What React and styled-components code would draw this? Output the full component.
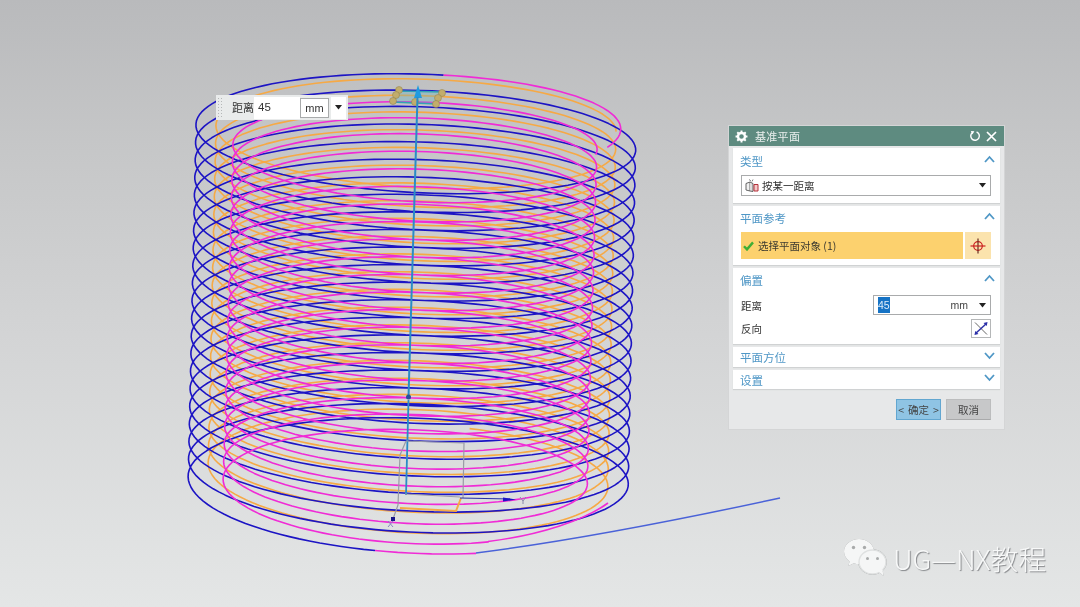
import React, { useMemo } from "react";
import styled, { createGlobalStyle } from "styled-components";

const Global = createGlobalStyle`
  html, body { margin: 0; padding: 0; background: #d4d5d6; }
  body { font-family: "Noto Sans CJK SC", "Liberation Sans", sans-serif; overflow: hidden; }
`;

const Stage = styled.div`
  position: relative;
  width: 1080px;
  height: 607px;
  overflow: hidden;
  background: linear-gradient(180deg, #b9babc 0%, #c6c7c8 25%, #d3d4d5 55%, #e4e6e6 100%);
  filter: blur(0.3px);
`;

const Scene = styled.svg`
  position: absolute;
  inset: 0;
  display: block;
`;

/* ---- floating distance entry ---- */
const Floater = styled.div`
  position: absolute;
  left: 216px;
  top: 95px;
  width: 132px;
  height: 25px;
  box-sizing: border-box;
  display: flex;
  align-items: center;
  background: #e9ebeb;
  font-size: 11px;
  color: #333;
`;
const Grip = styled.div`
  width: 7px;
  height: 22px;
  margin-left: 1px;
  background-image: radial-gradient(#b5b7b8 0.8px, transparent 1px);
  background-size: 3px 3px;
`;
const FloaterLabel = styled.span`
  margin-left: 8px;
  width: 22px;
  font-size: 11px;
  line-height: 25px;
`;
const FloaterInput = styled.div`
  width: 46px;
  height: 22px;
  padding-left: 4px;
  box-sizing: border-box;
  background: #fff;
  font: 11.5px/20px "Liberation Sans", sans-serif;
`;
const FloaterUnit = styled.div`
  width: 29px;
  height: 20px;
  box-sizing: border-box;
  border: 1px solid #a9abac;
  background: #fff;
  text-align: center;
  font: 11px/18px "Liberation Sans", sans-serif;
`;
const FloaterDrop = styled.div`
  width: 15px;
  height: 22px;
  margin-left: 2px;
  background: #fff;
  display: flex;
  align-items: center;
  justify-content: center;
`;

/* ---- dialog ---- */
const Dialog = styled.div`
  position: absolute;
  left: 729px;
  top: 126px;
  width: 275px;
  height: 303px;
  box-sizing: border-box;
  background: #e7e8e9;
  box-shadow: 0 0 0 1px #d4d5d6;
  display: flex;
  flex-direction: column;
`;
const TitleBar = styled.div`
  height: 20px;
  flex: none;
  display: flex;
  align-items: center;
  padding: 0 7px 0 6px;
  background: #5e8b80;
  color: #e9efed;
  font-size: 11px;
`;
const TitleText = styled.span`
  margin-left: 7px;
  flex: 1;
  letter-spacing: 0.3px;
`;
const Sections = styled.div`
  display: flex;
  flex-direction: column;
  gap: 3px;
  padding: 2px 4px 0;
`;
const Section = styled.div`
  height: ${(p) => p.$h}px;
  box-sizing: border-box;
  background: #fff;
  box-shadow: 0 1px 1px #d0d2d3;
  padding: 0 5px 0 7px;
`;
const SectionHead = styled.div`
  height: ${(p) => p.$h || 25}px;
  display: flex;
  align-items: center;
  justify-content: space-between;
  color: #4f97c6;
  font-size: 11.5px;
`;
const ChevronSlot = styled.span`
  display: flex;
  margin-bottom: 3px;
`;
const Controls = styled.div`
  margin-right: 4px;
`;
const SelectBox = styled.div`
  height: 21px;
  margin: 2px 0 0 1px;
  box-sizing: border-box;
  border: 1px solid #a9abac;
  display: flex;
  align-items: center;
  padding: 0 4px 0 3px;
  font-size: 10.5px;
  color: #333;
`;
const SelectText = styled.span`
  margin-left: 3px;
  flex: 1;
`;
const SelectionRow = styled.div`
  height: 27px;
  margin: 3px 0 0 1px;
  display: flex;
  gap: 2px;
`;
const SelectionBar = styled.div`
  flex: 1;
  display: flex;
  align-items: center;
  gap: 4px;
  padding-left: 2px;
  background: #fcd16e;
  font-size: 10.5px;
  color: #3c3a30;
`;
const PickButton = styled.div`
  width: 26px;
  display: flex;
  align-items: center;
  justify-content: center;
  background: #fbe3ad;
`;
const FieldRow = styled.div`
  height: ${(p) => p.$h}px;
  margin-left: 1px;
  display: flex;
  align-items: center;
  justify-content: space-between;
  font-size: 10.5px;
  color: #333;
`;
const NumberBox = styled.div`
  width: 118px;
  height: 20px;
  box-sizing: border-box;
  border: 1px solid #a9abac;
  display: flex;
  align-items: center;
  padding: 0 4px 0 4px;
  font: 10.5px "Liberation Sans", sans-serif;
`;
const Selected = styled.span`
  background: #1673c5;
  color: #dfeefa;
  padding: 1px 0;
  line-height: 14px;
`;
const Unit = styled.span`
  margin-left: auto;
  margin-right: 11px;
  color: #444;
`;
const IconButton = styled.div`
  width: 20px;
  height: 19px;
  flex: none;
  box-sizing: border-box;
  border: 1px solid #b5b7b8;
  display: flex;
  align-items: center;
  justify-content: center;
`;
const Actions = styled.div`
  display: flex;
  justify-content: flex-end;
  gap: 5px;
  padding: 10px 13px 0 0;
`;
const ActionButton = styled.div`
  width: 45px;
  height: 21px;
  box-sizing: border-box;
  display: flex;
  align-items: center;
  justify-content: center;
  gap: 4px;
  font-size: 10.5px;
  color: #444;
  background: ${(p) => (p.$primary ? "#8fc4e4" : "#c7c8c9")};
  border: 1px solid ${(p) => (p.$primary ? "#62a6d0" : "#bcbdbe")};
  border-bottom-color: ${(p) => (p.$primary ? "#62a6d0" : "#a9aaab")};
`;

/* ---- watermark ---- */
const Watermark = styled.div`
  position: absolute;
  left: 842px;
  top: 535px;
  display: flex;
  align-items: center;
  gap: 5px;
`;
const WatermarkText = styled.span`
  font-family: "Noto Sans CJK SC", "Noto Sans", sans-serif;
  font-weight: 300;
  font-size: 27.8px;
  line-height: 46px;
  color: #f7f8f8;
  text-shadow: 1px 1px 1px #85878a;
  white-space: nowrap;
`;

/* ---- icons ---- */
const Chevron = ({ up }) => (
  <ChevronSlot>
    <svg width="11" height="8" viewBox="0 0 11 8">
      <path d={up ? "M1 7L5.5 2L10 7" : "M1 1L5.5 6L10 1"} fill="none" stroke="#4f97c6" strokeWidth="1.8" />
    </svg>
  </ChevronSlot>
);
const Caret = () => (
  <svg width="7" height="5" viewBox="0 0 7 5">
    <path d="M0 0H7L3.5 4.5Z" fill="#222" />
  </svg>
);
const Gear = () => (
  <svg width="13" height="13" viewBox="0 0 24 24">
    <circle cx="12" cy="12" r="6.5" fill="none" stroke="#fff" strokeWidth="4.5" />
    <path
      d="M12 1V5M12 19V23M1 12H5M19 12H23M4.2 4.2L7 7M17 17L19.8 19.8M4.2 19.8L7 17M17 7L19.8 4.2"
      stroke="#fff"
      strokeWidth="3.6"
    />
  </svg>
);
const Reset = () => (
  <svg width="12" height="12" viewBox="0 0 12 12" style={{ marginRight: 5 }}>
    <path d="M7.6 2A4.3 4.3 0 1 1 3.2 2.8" fill="none" stroke="#fff" strokeWidth="1.4" />
    <path d="M1.8 1L5.4 1.2L3.4 4.4Z" fill="#fff" />
  </svg>
);
const Close = () => (
  <svg width="11" height="11" viewBox="0 0 11 11">
    <path d="M1 1L10 10M10 1L1 10" stroke="#fff" strokeWidth="1.7" />
  </svg>
);
const TypeIcon = () => (
  <svg width="14" height="15" viewBox="0 0 14 15">
    <path d="M1 5.5L5 4V13L1 12Z" fill="#f1f1f1" stroke="#555" strokeWidth="0.9" />
    <path d="M5 4L8 5.5V13.5L5 13" fill="#ddd" stroke="#555" strokeWidth="0.9" />
    <path d="M9 6.5H13V13H9Z" fill="#f4c9c9" stroke="#b5303a" strokeWidth="1" />
    <path d="M4 1.5L6 3M8 1.5L7 3.5" stroke="#777" strokeWidth="0.9" />
  </svg>
);
const Check = () => (
  <svg width="11" height="10" viewBox="0 0 11 10">
    <path d="M1 5.2L4 8.4L10 1.4" fill="none" stroke="#3fae35" strokeWidth="2.4" />
  </svg>
);
const Crosshair = () => (
  <svg width="16" height="16" viewBox="0 0 16 16">
    <circle cx="8" cy="8" r="4.3" fill="none" stroke="#c22" strokeWidth="1.2" />
    <path d="M8 0.5V15.5" stroke="#6a2b20" strokeWidth="1.2" />
    <path d="M0.5 8H15.5" stroke="#c22" strokeWidth="1.2" />
  </svg>
);
const ReverseIcon = () => (
  <svg width="16" height="15" viewBox="0 0 16 15">
    <path d="M2 1.5L14 13.5" stroke="#555" strokeWidth="0.9" />
    <path d="M2.500 12.500L13.500 2.500" stroke="#2b2fa8" strokeWidth="1.5" />
    <path d="M14.5 1L13.8 5L10.5 2Z M1.5 14L2.2 10L5.5 13Z" fill="#2b2fa8" />
  </svg>
);
const WeChat = () => (
  <svg width="46" height="42" viewBox="0 0 46 42" style={{ filter: "drop-shadow(0.6px 0.8px 0.6px #8f9192)" }}>
    <path d="M17 2C8.7 2 2 7.6 2 14.6c0 4 2.2 7.5 5.6 9.8L6.3 29l5.5-2.8c1.7.5 3.4.9 5.2.9 8.300 0 15-5.600 15-12.500S25.300 2 17 2Z" fill="#f5f6f6" />
    <ellipse cx="30.500" cy="25" rx="13.500" ry="12" fill="#f5f6f6" stroke="#dfe1e1" strokeWidth="1.400" />
    <path d="M36 34L41.500 39L40.500 32.500Z" fill="#f5f6f6" />
    <circle cx="11.500" cy="10.500" r="1.700" fill="#a9abab" />
    <circle cx="22.500" cy="10.500" r="1.700" fill="#a9abab" />
    <circle cx="25.500" cy="21.500" r="1.500" fill="#a9abab" />
    <circle cx="35.500" cy="21.500" r="1.500" fill="#a9abab" />
  </svg>
);

/* ---- helix geometry: the rings open up only near the two ends ---- */
function ringHeight(s, { ryTop, ryMid, ryBottom, span }) {
  if (s < 2) return ryTop + ((ryMid - ryTop) * Math.max(s, 0)) / 2;
  if (s > span - 2) return ryMid + ((ryBottom - ryMid) * (s - span + 2)) / 2;
  return ryMid;
}
function helix(o) {
  const { x0, x1, y0, pitch, rx, tilt, s0, s1, span } = o;
  const pts = [];
  const steps = Math.ceil((s1 - s0) * 120);
  for (let i = 0; i <= steps; i++) {
    const s = s0 + ((s1 - s0) * i) / steps;
    const th = -Math.PI / 2 - 2 * Math.PI * s;
    const r = typeof rx === "function" ? rx(s) : rx;
    const c = Math.cos(th) * r;
    const x = x0 + ((x1 - x0) * s) / span + c;
    const y = y0 + pitch * s + Math.sin(th) * ringHeight(s, o) + tilt * c;
    pts.push(`${x.toFixed(1)} ${y.toFixed(1)}`);
  }
  return "M" + pts.join("L");
}

const BLUE = "#1c14c4";
const PINK = "#f02bd6";
const ORANGE = "#f6a945";
const AXIS = "#2a8cc6";

const Coil = () => {
  const paths = useMemo(() => {
    const outer = { x0: 416, x1: 408, y0: 128.6, pitch: 17.58, rx: 220, ryTop: 54.6, ryMid: 57.1, ryBottom: 64, tilt: 0.037, span: 20.5 };
    const orange = { x0: 416, x1: 408, y0: 128.6, pitch: 17.75, rx: 200, ryTop: 49.6, ryMid: 52, ryBottom: 58, tilt: 0.037, span: 19.5 };
    const pink = { x0: 415, x1: 405, y0: 147, pitch: 17.6, rx: 182, ryTop: 45, ryMid: 48.4, ryBottom: 53, tilt: 0.037, span: 19.5 };
    return {
      orange: helix({ ...orange, s0: -0.25, s1: 19.95 }),
      blue: helix({ ...outer, s0: -0.02, s1: 20.476 }),
      pinkEnd: helix({ ...outer, s0: 20.476, s1: 20.55 }),
      pinkTop: helix({
        ...outer,
        rx: (s) => 201 + 19 * Math.min(1, (s + 0.3) / 0.28),
        s0: -0.3,
        s1: -0.02,
      }),
      pink: helix({ ...pink, s0: -0.27, s1: 19.576 }),
    };
  }, []);
  return (
    <Scene width="1080" height="607" viewBox="0 0 1080 607">
      <g fill="none" strokeWidth="1.6" strokeLinejoin="round">
        <path d={paths.orange} stroke={ORANGE} />
        <path d={paths.blue} stroke={BLUE} />
        <path d={paths.pink} stroke={PINK} />
        <path d={paths.pinkTop} stroke={PINK} />
        <path d={paths.pinkEnd} stroke={PINK} />
        <path d="M476 553C570 541 660 524 780 498" stroke="#4a62d8" strokeWidth="1.500" />
        <path d="M488 541.500C540 535 585 520 608 503" stroke={PINK} />
      </g>

      {/* datum plane handle */}
      <path d="M399 91L442 92L436 104L393 102Z" fill="#5fb3c0" fillOpacity="0.35" stroke="#33a3b4" strokeWidth="1.500" />
      {[[399, 90], [396, 95], [393, 101], [415, 102], [442, 93], [438, 98], [436, 104]].map(([cx, cy]) => (
        <circle key={`${cx}-${cy}`} cx={cx} cy={cy} r="3.500" fill="#c2ad6c" stroke="#8f7f48" strokeWidth="0.500" />
      ))}
      <path d="M418 85L422 98H414Z" fill="#1f9be0" />
      <path d="M417.500 97L408.500 397" stroke={AXIS} strokeWidth="2" />
      <circle cx="408.500" cy="397" r="2.500" fill="#26509c" />
      <path d="M408.500 400L406 495" stroke={AXIS} strokeWidth="1.800" />

      {/* csys and box */}
      <g fill="none" stroke="#9a9ba6" strokeWidth="1.200">
        <path d="M406 441L464 443L463 498" />
        <path d="M406 441L400 455L398 505L393 519" />
        <path d="M405 494L460 497" />
      </g>
      <path d="M400 508L456 511L461 498" fill="none" stroke={ORANGE} strokeWidth="2" />
      <path d="M460 498L510 499" stroke="#2730a8" strokeWidth="1.200" />
      <path d="M503 497.500L516 499.500L503 501.500Z" fill="#1c14c4" />
      <rect x="391" y="517" width="4" height="4" fill="#16148c" />
      <path d="M388 521L393 527M393 521L388 527" stroke="#8a82c8" strokeWidth="1" />
      <path d="M520 497L523 501L526 497M523 501V504" fill="none" stroke="#8a8aa8" strokeWidth="1" />
    </Scene>
  );
};

export default function App() {
  return (
    <>
      <Global />
      <Stage>
        <Coil />
        <Floater>
          <Grip />
          <FloaterLabel>距离</FloaterLabel>
          <FloaterInput>45</FloaterInput>
          <FloaterUnit>mm</FloaterUnit>
          <FloaterDrop>
            <Caret />
          </FloaterDrop>
        </Floater>

        <Dialog>
          <TitleBar>
            <Gear />
            <TitleText>基准平面</TitleText>
            <Reset />
            <Close />
          </TitleBar>
          <Sections>
            <Section $h={55}>
              <SectionHead>
                类型
                <Chevron up />
              </SectionHead>
              <Controls>
                <SelectBox>
                  <TypeIcon />
                  <SelectText>按某一距离</SelectText>
                  <Caret />
                </SelectBox>
              </Controls>
            </Section>
            <Section $h={59}>
              <SectionHead $h={23}>
                平面参考
                <Chevron up />
              </SectionHead>
              <Controls>
                <SelectionRow>
                  <SelectionBar>
                    <Check />
                    选择平面对象 (1)
                  </SelectionBar>
                  <PickButton>
                    <Crosshair />
                  </PickButton>
                </SelectionRow>
              </Controls>
            </Section>
            <Section $h={76}>
              <SectionHead $h={23}>
                偏置
                <Chevron up />
              </SectionHead>
              <Controls>
                <FieldRow $h={28}>
                  距离
                  <NumberBox>
                    <Selected>45</Selected>
                    <Unit>mm</Unit>
                    <Caret />
                  </NumberBox>
                </FieldRow>
                <FieldRow $h={18}>
                  反向
                  <IconButton>
                    <ReverseIcon />
                  </IconButton>
                </FieldRow>
              </Controls>
            </Section>
            <Section $h={20}>
              <SectionHead $h={20}>
                平面方位
                <Chevron />
              </SectionHead>
            </Section>
            <Section $h={19}>
              <SectionHead $h={19}>
                设置
                <Chevron />
              </SectionHead>
            </Section>
          </Sections>
          <Actions>
            <ActionButton $primary>
              <span>&lt;</span>确定<span>&gt;</span>
            </ActionButton>
            <ActionButton>取消</ActionButton>
          </Actions>
        </Dialog>

        <Watermark>
          <WeChat />
          <WatermarkText>UG—NX教程</WatermarkText>
        </Watermark>
      </Stage>
    </>
  );
}
